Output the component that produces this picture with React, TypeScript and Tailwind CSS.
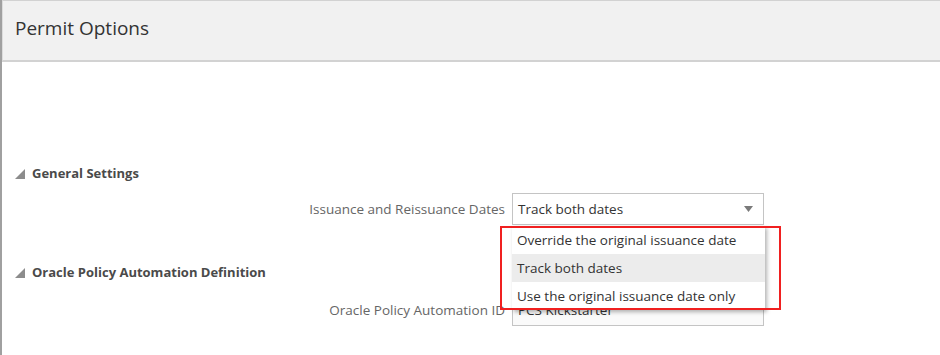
const font = { fontFamily: '"Open Sans", "Noto Sans", sans-serif' };

function SectionHeader({ title }: { title: string }) {
  return (
    <div className="flex items-center gap-[7px] pl-[13px] h-5">
      <svg width="10" height="10" viewBox="0 0 10 10">
        <polygon points="10,0 10,10 0,10" fill="#8c8c8c" />
      </svg>
      <span className="text-[13px] font-bold text-[#4a4a4a]">{title}</span>
    </div>
  );
}

function Field({ label, children }: { label: string; children: React.ReactNode }) {
  return (
    <div className="flex items-center">
      <div className="w-[503px] text-right text-[13.5px] text-[#666]">{label}</div>
      <div className="ml-[7px] relative">{children}</div>
    </div>
  );
}

const options = [
  'Override the original issuance date',
  'Track both dates',
  'Use the original issuance date only',
];

export default function App() {
  return (
    <div style={font} className="w-[940px] h-[355px] bg-white border-l-2 border-[#a0a0a0] overflow-hidden flex flex-col">
      <header className="h-[62px] shrink-0 bg-[#f1f1f1] border-t border-b-2 border-[#d2d2d2] border-l border-l-[#dcdcdc] flex items-center pl-[12px] pb-[5px]">
        <h1 className="text-[19px] text-[#333]">Permit Options</h1>
      </header>

      <div className="mt-[102px]">
        <SectionHeader title="General Settings" />
      </div>
      <div className="mt-[9px]">
        <Field label="Issuance and Reissuance Dates">
          <div className="w-[252px] h-[32px] border border-[#c4c4c4] bg-white flex items-center justify-between pl-[5px] pr-[10px] text-[13.5px] text-[#333]">
            <span>Track both dates</span>
            <svg width="9" height="6" viewBox="0 0 9 6">
              <polygon points="0,0 9,0 4.5,6" fill="#7a7a7a" />
            </svg>
          </div>
          {/* open listbox */}
          <div className="absolute left-0 top-[33px] w-[253px] bg-white shadow-[2px_2px_4px_rgba(0,0,0,0.3)] z-10 flex flex-col">
            {options.map((o, i) => (
              <div
                key={o}
                className={`h-[28px] flex items-center pl-[5px] text-[13.5px] text-[#333] ${i === 1 ? 'bg-[#ececec]' : 'bg-white'}`}
              >
                {o}
              </div>
            ))}
          </div>
          {/* annotation */}
          <div className="absolute left-[-12px] top-[33px] w-[281px] h-[84px] border-2 border-[#f02020] z-20 pointer-events-none" />
        </Field>
      </div>

      <div className="mt-[38px]">
        <SectionHeader title="Oracle Policy Automation Definition" />
      </div>
      <div className="mt-[11px]">
        <Field label="Oracle Policy Automation ID">
          <div className="w-[252px] h-[32px] border border-[#c4c4c4] bg-[#fafafa] flex items-center pl-[5px] text-[13.5px] text-[#333]">
            PCS Kickstarter
          </div>
        </Field>
      </div>
    </div>
  );
}
